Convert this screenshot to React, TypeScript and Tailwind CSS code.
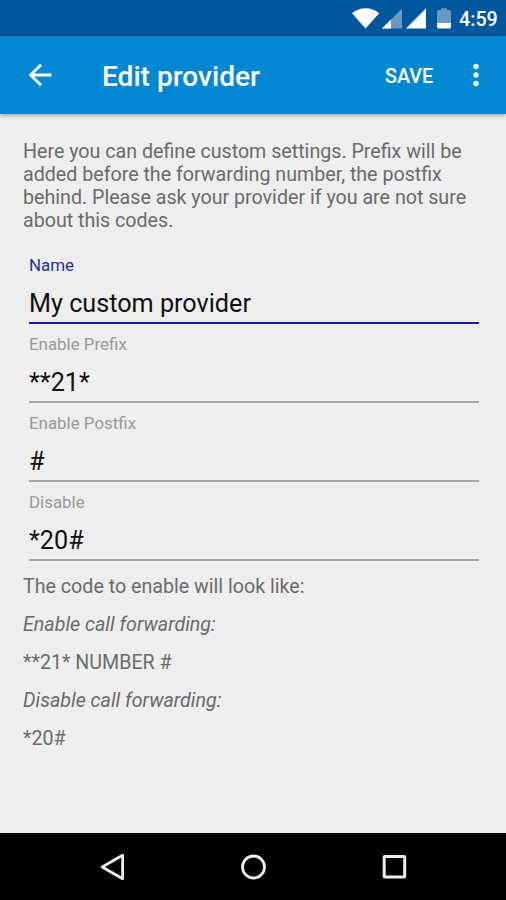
import React from 'react'

type FieldProps = {
  label: string
  value: string
  active?: boolean
}

const fields: FieldProps[] = [
  { label: 'Name', value: 'My custom provider', active: true },
  { label: 'Enable Prefix', value: '**21*' },
  { label: 'Enable Postfix', value: '#' },
  { label: 'Disable', value: '*20#' },
]

const StatusBar: React.FC = () => {
  return (
    <div className="flex h-[36px] items-center bg-[#01579b] pl-[350px] text-white">
      {/* Wifi, signal x2, battery */}
      <svg width="104" height="36" viewBox="350 0 104 36" fill="#fff">
        <path d="M352 13.2C356 9.8 360.5 8.2 365.5 8.2C370.5 8.2 375.2 9.8 379.2 13.2L365.5 28.4Z" />
        <path d="M402 8.5V28.5H382Z" fillOpacity="0.4" />
        <path d="M391 19.5V28.5H382Z" />
        <path d="M426 8.3V28.5H406Z" />
        <path d="M441 8.2H447V10H449.5Q451 10 451 11.5V23H437V11.5Q437 10 438.5 10H441Z" fillOpacity="0.4" />
        <path d="M437 23H451V27Q451 28.5 449.5 28.5H438.5Q437 28.5 437 27Z" />
      </svg>
      <span className="ml-[5px] mt-[3px] text-[19.7px] leading-[23px] font-medium">4:59</span>
    </div>
  )
}

const Toolbar: React.FC = () => {
  return (
    <header className="relative z-10 flex h-[78px] items-center bg-[#0288d1] text-white shadow-[0_1px_4px_rgba(0,0,0,0.4)]">
      <button className="ml-[23px]">
        <svg width="34" height="34" viewBox="0 0 24 24" fill="#fff">
          <path d="M20 11H7.83l5.59-5.59L12 4l-8 8 8 8 1.41-1.41L7.83 13H20v-2z" />
        </svg>
      </button>
      <h1 className="ml-[45px] mt-[3px] w-[283px] text-[28.1px] leading-[33px] font-medium">Edit provider</h1>
      <button className="mt-[2px] w-[48px] text-[19.7px] leading-[23px] font-medium">SAVE</button>
      <button className="ml-[26px]">
        <svg width="34" height="34" viewBox="0 0 24 24" fill="#fff">
          <path d="M12 8c1.1 0 2-.9 2-2s-.9-2-2-2-2 .9-2 2 .9 2 2 2zm0 2c-1.1 0-2 .9-2 2s.9 2 2 2 2-.9 2-2-.9-2-2-2zm0 6c-1.1 0-2 .9-2 2s.9 2 2 2 2-.9 2-2-.9-2-2-2z" />
        </svg>
      </button>
    </header>
  )
}

const Field: React.FC<FieldProps> = ({ label, value, active }) => {
  return (
    <div className="flex flex-col pt-[10px]">
      <label className={`text-[16.9px] leading-[20px] ${active ? 'text-[#1f339c]' : 'text-[#9a9a9a]'}`}>
        {label}
      </label>
      <div className="mt-[14px] text-[25.2px] leading-[30px] text-[#111111]">{value}</div>
      <div className={`mt-[3px] h-[2px] ${active ? 'bg-[#1a1a94]' : 'bg-[#a6a6a6]'}`} />
    </div>
  )
}

const NavBar: React.FC = () => {
  return (
    <nav className="flex h-[67px] items-center justify-center gap-[107px] bg-black">
      <svg width="34" height="34" viewBox="0 0 34 34" fill="none" stroke="#eee" strokeWidth="2.8" strokeLinejoin="round">
        <path d="M27.6 5.3V28.7L7.2 17Z" />
      </svg>
      <svg width="34" height="34" viewBox="0 0 34 34" fill="none" stroke="#eee" strokeWidth="2.8">
        <circle cx="17.5" cy="17" r="11" />
      </svg>
      <svg width="34" height="34" viewBox="0 0 34 34" fill="none" stroke="#eee" strokeWidth="3" strokeLinejoin="round">
        <rect x="7.2" y="6.6" width="20.5" height="20.5" rx="0.5" />
      </svg>
    </nav>
  )
}

const App: React.FC = () => {
  return (
    <div className="flex h-[900px] w-[506px] flex-col overflow-hidden bg-[#eeeeee] font-['Roboto',sans-serif]">
      <StatusBar />
      <Toolbar />

      <main className="flex-1 pt-[26px] text-[19.65px] leading-[23px] text-[#6b6b6b]">
        <p className="ml-[23px] w-[460px]">
          Here you can define custom settings. Prefix will be added before the forwarding number, the postfix behind.
          Please ask your provider if you are not sure about this codes.
        </p>

        <div className="mt-[13px] ml-[29px] w-[450px]">
          {fields.map((field) => (
            <Field key={field.label} {...field} />
          ))}
        </div>

        {/* Preview of the dialed codes */}
        <div className="mt-[14px] ml-[23px] flex flex-col gap-[15px]">
          <p>The code to enable will look like:</p>
          <p className="italic">Enable call forwarding:</p>
          <p>**21* NUMBER #</p>
          <p className="italic">Disable call forwarding:</p>
          <p>*20#</p>
        </div>
      </main>

      <NavBar />
    </div>
  )
}

export default App
